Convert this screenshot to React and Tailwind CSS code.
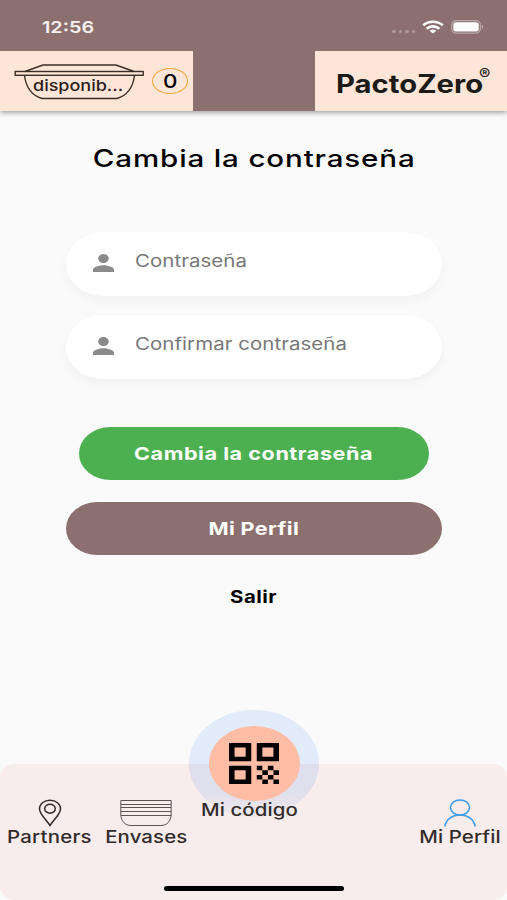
import React, { useState } from "react";

function PersonIcon() {
  return (
    <svg viewBox="4 4 16 16" preserveAspectRatio="none" className="w-[21px] h-[18px] -mt-[2px] shrink-0" fill="#8a8a8a">
      <path d="M12 12c2.21 0 4-1.79 4-4s-1.79-4-4-4-4 1.79-4 4 1.79 4 4 4zm0 2c-2.67 0-8 1.34-8 4v2h16v-2c0-2.66-5.33-4-8-4z" />
    </svg>
  );
}

function StatusBar() {
  return (
    <div className="h-[51px] flex items-start justify-between pl-[42px] pr-[23px] text-white">
      <span className="inline-block origin-left scale-x-[1.2] mt-[17px] text-[16.5px] leading-[21px] font-semibold text-[#f8f0f0]">
        12:56
      </span>
      <div className="flex items-center mt-5">
        <div className="flex gap-[3px] mr-[7px] mt-[9px]">
          {[0, 1, 2, 3].map((dot) => (
            <span key={dot} className="w-[3.5px] h-[3px] rounded-full bg-white/30" />
          ))}
        </div>
        <svg viewBox="0 0 22 14" className="w-[22px] h-[14px] mr-[7px]" fill="none" stroke="white" strokeWidth="2.6">
          <path d="M1.2 5.2C6.5 .5 15.5 .5 20.8 5.2" />
          <path d="M4.6 8.8C8.3 5.5 13.7 5.5 17.4 8.8" />
          <path d="M7.6 10.7C9.6 9.2 12.4 9.2 14.4 10.7L11 13.6Z" fill="white" stroke="none" />
        </svg>
        <svg viewBox="0 0 33 14" className="w-[33px] h-[14px]">
          <rect x="0.7" y="0.7" width="28.6" height="12.4" rx="4" fill="none" stroke="white" strokeOpacity="0.4" strokeWidth="1.2" />
          <rect x="2.3" y="2.3" width="25.4" height="9.2" rx="2.5" fill="white" />
          <path d="M30.8 4.8C32.6 5.4 32.6 8.4 30.8 9Z" fill="white" fillOpacity="0.45" />
        </svg>
      </div>
    </div>
  );
}

function Header() {
  return (
    <div className="h-[59.5px] flex justify-between">
      <div className="w-[193px] bg-[#fde5d7] flex items-start">
        <div className="relative w-[130px] h-[36px] ml-[14px] mt-[13px]">
          <svg viewBox="0 0 130 36" className="w-full h-full" fill="none" stroke="#3b2e26" strokeWidth="1.4">
            <path d="M11 7.5L29 1H102L120 7.5" />
            <rect x="1.2" y="7.5" width="128" height="3.8" />
            <path d="M10.5 11.5C12 23 18 31.5 28 34.5H103C113 31.5 119 23 120.5 11.5" />
          </svg>
          <span className="absolute left-[19px] top-[12px] origin-left scale-x-[1.2] text-[15px] leading-[20px] font-medium text-[#2b201b]">
            disponib...
          </span>
        </div>
        <div className="w-[36px] h-[26px] ml-[8px] mt-[17px] rounded-[50%] border-[1.5px] border-[#f9a63a] flex items-center justify-center">
          <span className="inline-block scale-x-[1.18] mt-[1px] text-[19px] leading-[20px] font-medium text-black">0</span>
        </div>
      </div>
      <div className="w-[192px] bg-[#fde5d7] flex items-start pl-[21px] pt-[17px]">
        <span className="inline-block w-[147px] whitespace-nowrap">
          <span className="inline-block origin-left scale-x-[1.17] text-[25px] leading-[32px] font-bold text-[#1c1a17]">
            PactoZero
          </span>
        </span>
        <span className="-ml-[4px] -mt-[1px] origin-left scale-x-[1.1] text-[15.5px] leading-[16px] font-medium text-[#1c1a17]">®</span>
      </div>
    </div>
  );
}

function Field({ label, value, onChange }) {
  return (
    <label className="h-[63.5px] flex items-center pl-[27px] rounded-[37px/32px] bg-white shadow-[0_5px_10px_rgba(0,0,0,0.04)]">
      <PersonIcon />
      <input
        type="password"
        placeholder={label}
        value={value}
        onChange={(e) => onChange(e.target.value)}
        className="w-[220px] ml-[21px] -mt-[5px] origin-left scale-x-[1.2] text-[17px] leading-[24px] tracking-[0.07px] text-black placeholder:text-[#777777] outline-none bg-transparent"
      />
    </label>
  );
}

function BottomNav() {
  return (
    <div className="relative h-[136px] bg-[#f8ecec] rounded-[14px] text-[#322b2b] text-[17px] leading-[20px] font-medium flex flex-col justify-between">
      <div className="flex items-start pt-[35px] pl-px">
        <div className="w-[97px] flex flex-col items-center">
          <svg viewBox="0 0 24 28" className="w-[24px] h-[28px]" fill="none" stroke="#322b2b" strokeWidth="1.5">
            <path d="M12 26.5C8 20.5 1.5 15 1.5 10C1.5 5 6 1.3 12 1.3S22.5 5 22.5 10C22.5 15 16 20.5 12 26.5Z" />
            <ellipse cx="12" cy="9.7" rx="5.3" ry="4.5" />
          </svg>
          <span className="inline-block scale-x-[1.2] tracking-[0.2px]">Partners</span>
        </div>
        <div className="w-[96px] flex flex-col items-center">
          <svg viewBox="0 0 52 28" className="w-[52px] h-[28px]" fill="none" stroke="#5c5353" strokeWidth="1">
            <path d="M.8 1.5H51.2V15C51.2 22 47 26.5 41 26.5H11C5 26.5 .8 22 .8 15Z" />
            <path d="M1 5.5H51M1 8.5H51M1 12.5H51M1 16.5H51" />
          </svg>
          <span className="inline-block scale-x-[1.2] tracking-[0.1px]">Envases</span>
        </div>
        <div className="w-[110px] pt-px flex justify-center">
          <span className="relative z-10 inline-block scale-x-[1.2] tracking-[0.1px] whitespace-nowrap">Mi código</span>
        </div>
        <div className="w-[94px] ml-auto flex flex-col items-center">
          <svg viewBox="0 0 32 28" className="w-[32px] h-[28px]" fill="none" stroke="#3c9be8" strokeWidth="1.5">
            <ellipse cx="16" cy="8.5" rx="9.5" ry="7.5" />
            <path d="M.8 27.5C2 20.5 8 16 16 16S30 20.5 31.2 27.5" />
          </svg>
          <span className="inline-block scale-x-[1.2] tracking-[0.1px] whitespace-nowrap">Mi Perfil</span>
        </div>
      </div>
      {/* QR button */}
      <button className="absolute left-[189px] -top-[54px] w-[130px] h-[107px] rounded-[50%] bg-linear-to-b from-[#2a7dfa]/12 from-75% to-[#2a7dfa]/4 flex items-center justify-center">
        <span className="w-[91px] h-[75px] rounded-[50%] bg-[#ffbda6] flex items-center justify-center">
          <svg viewBox="3 3 18 18" preserveAspectRatio="none" className="w-[50px] h-[41px]" fill="black">
            <path d="M3 11h8V3H3v8zm2-6h4v4H5V5zM3 21h8v-8H3v8zm2-6h4v4H5v-4zM13 3v8h8V3h-8zm6 6h-4V5h4v4zM19 19h2v2h-2zM13 13h2v2h-2zM15 15h2v2h-2zM13 17h2v2h-2zM15 19h2v2h-2zM17 17h2v2h-2zM17 13h2v2h-2zM19 15h2v2h-2z" />
          </svg>
        </span>
      </button>
      <div className="w-[180px] h-[5px] mb-[9px] mx-auto rounded-full bg-black" />
    </div>
  );
}

export default function App() {
  const [password, setPassword] = useState("");
  const [confirm, setConfirm] = useState("");

  return (
    <div className="w-[507px] h-[900px] overflow-hidden bg-[#fafafa] flex flex-col font-['Inter',sans-serif]">
      <div className="bg-[#8b706f] shadow-[0_2px_5px_rgba(0,0,0,0.35)]">
        <StatusBar />
        <Header />
      </div>

      <div className="flex-1 flex flex-col pl-[66px] pr-[65px] pt-[31.5px]">
        <h1 className="text-center text-[24px] leading-[34px] font-medium text-black">
          <span className="inline-block scale-x-[1.23] tracking-[0.7px] whitespace-nowrap">Cambia la contraseña</span>
        </h1>

        <div className="flex flex-col gap-[19.5px] mt-[56px]">
          <Field label="Contraseña" value={password} onChange={setPassword} />
          <Field label="Confirmar contraseña" value={confirm} onChange={setConfirm} />
        </div>

        <button className="h-[53px] mx-[13px] mt-[48.5px] rounded-[32px/27px] bg-[#4caf50] text-white text-[18px] font-bold">
          <span className="inline-block scale-x-[1.2] tracking-[0.45px]">Cambia la contraseña</span>
        </button>
        <button className="h-[53px] mt-[22px] rounded-[32px/27px] bg-[#8b706f] text-white text-[18px] font-bold">
          <span className="inline-block scale-x-[1.2] tracking-[0.3px]">Mi Perfil</span>
        </button>
        <button className="mt-[30px] text-[17px] leading-[24px] font-bold text-black">
          <span className="inline-block scale-x-[1.2] tracking-[0.4px]">Salir</span>
        </button>
      </div>

      <BottomNav />
    </div>
  );
}
